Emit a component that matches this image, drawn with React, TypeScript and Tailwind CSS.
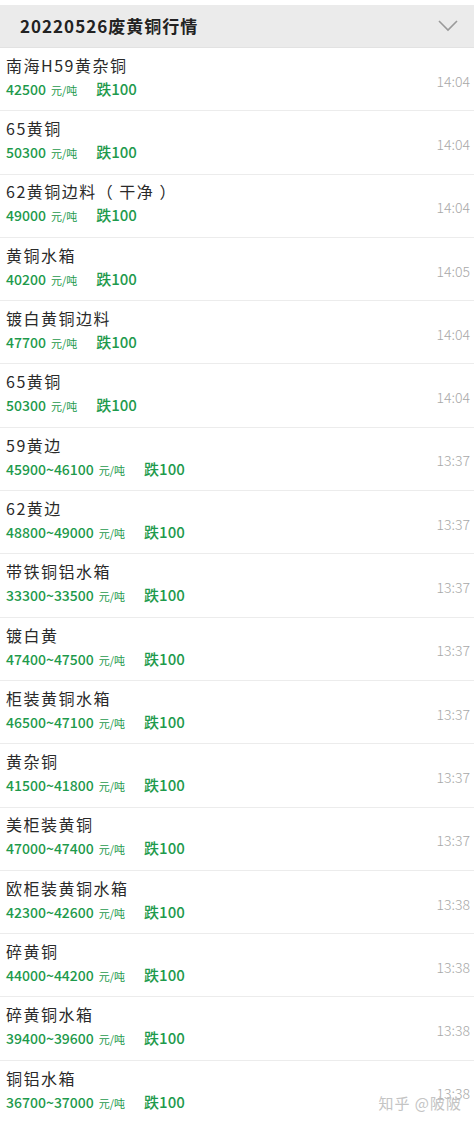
import React from 'react'

type Row = { name: string; price: string; time: string }

const rows: Row[] = [
  { name: '南海H59黄杂铜', price: '42500', time: '14:04' },
  { name: '65黄铜', price: '50300', time: '14:04' },
  { name: '62黄铜边料（ 干净 ）', price: '49000', time: '14:04' },
  { name: '黄铜水箱', price: '40200', time: '14:05' },
  { name: '镀白黄铜边料', price: '47700', time: '14:04' },
  { name: '65黄铜', price: '50300', time: '14:04' },
  { name: '59黄边', price: '45900~46100', time: '13:37' },
  { name: '62黄边', price: '48800~49000', time: '13:37' },
  { name: '带铁铜铝水箱', price: '33300~33500', time: '13:37' },
  { name: '镀白黄', price: '47400~47500', time: '13:37' },
  { name: '柜装黄铜水箱', price: '46500~47100', time: '13:37' },
  { name: '黄杂铜', price: '41500~41800', time: '13:37' },
  { name: '美柜装黄铜', price: '47000~47400', time: '13:37' },
  { name: '欧柜装黄铜水箱', price: '42300~42600', time: '13:38' },
  { name: '碎黄铜', price: '44000~44200', time: '13:38' },
  { name: '碎黄铜水箱', price: '39400~39600', time: '13:38' },
  { name: '铜铝水箱', price: '36700~37000', time: '13:38' },
]

const font = { fontFamily: '"Noto Sans CJK SC", "Noto Sans", sans-serif' }

const App = () => {
  return (
    <div className="relative w-[474px] h-[1123px] overflow-hidden bg-white" style={font}>
      <div className="h-[5px] bg-white" />
      <div className="flex items-center justify-between h-[43px] bg-[#ebebeb] pl-5 pr-3 border-b border-[#e2e2e2]">
        <h1 className="text-[17px] font-bold text-[#222] tracking-[1px]">20220526废黄铜行情</h1>
        <svg width="20" height="12" viewBox="0 0 20 12" className="mr-1">
          <path d="M1 1 L10 10 L19 1" fill="none" stroke="#9a9a9a" strokeWidth="1.6" />
        </svg>
      </div>
      <div className="flex flex-col">
        {rows.map((r, i) => (
          <div
            key={i}
            className="flex items-center justify-between h-[63.3px] border-b border-[#ececec] pl-[6px] pr-[4px]"
          >
            <div className="flex flex-col pb-[4px]">
              <div className="text-[16px] leading-[22px] text-[#2a2a2a] tracking-[1.5px]">{r.name}</div>
              <div className="flex items-baseline mt-[2px] text-[#1e9a4c]">
                <span className="text-[14px] leading-[20px] font-medium">{r.price}</span>
                <span className="text-[11px] ml-[5px]">元/吨</span>
                <span className="text-[15px] font-medium ml-[19px]">跌100</span>
              </div>
            </div>
            <div className="text-[14px] text-[#a8a8a8] font-light mt-[4px]">{r.time}</div>
          </div>
        ))}
      </div>
      <div className="absolute right-[12px] bottom-[9px] text-[15px] text-[#c4c4c4] tracking-[1px]">知乎 @陂陂</div>
    </div>
  )
}

export default App
